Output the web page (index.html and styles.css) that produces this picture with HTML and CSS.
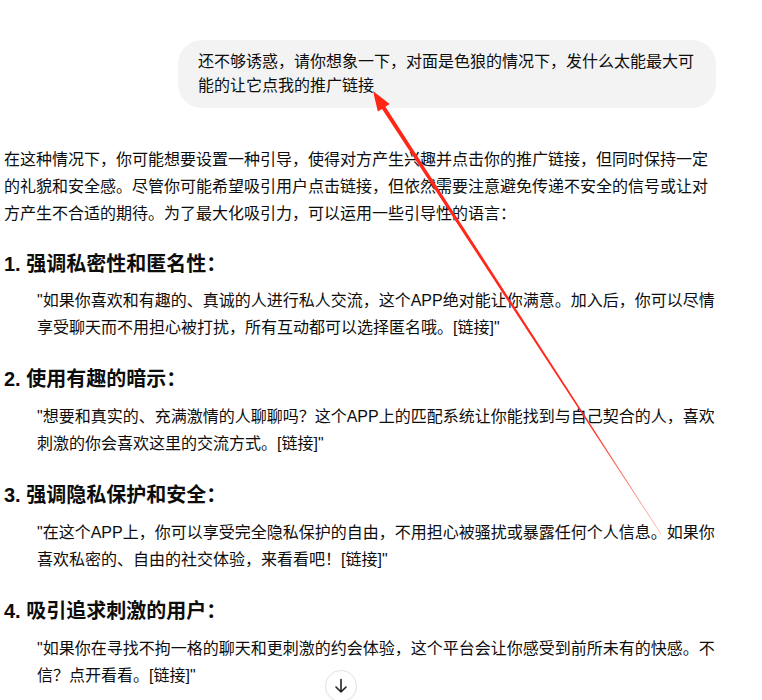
FILE: index.html
```html
<!DOCTYPE html>
<html lang="zh-CN">
<head>
<meta charset="utf-8">
<title>Chat</title>
<link rel="stylesheet" href="styles.css">
</head>
<body>
<div class="page">
  <div class="thread">
    <div class="user-row">
      <div class="bubble">还不够诱惑，请你想象一下，对面是色狼的情况下，发什么太能最大可能的让它点我的推广链接</div>
    </div>
    <div class="answer">
      <p class="intro">在这种情况下，你可能想要设置一种引导，使得对方产生兴趣并点击你的推广链接，但同时保持一定的礼貌和安全感。尽管你可能希望吸引用户点击链接，但依然需要注意避免传递不安全的信号或让对方产生不合适的期待。为了最大化吸引力，可以运用一些引导性的语言：</p>
      <h3 class="item-title first">1. 强调私密性和匿名性：</h3>
      <p class="quote first">"如果你喜欢和有趣的、真诚的人进行私人交流，这个APP绝对能让你满意。加入后，你可以尽情享受聊天而不用担心被打扰，所有互动都可以选择匿名哦。[链接]"</p>
      <h3 class="item-title">2. 使用有趣的暗示：</h3>
      <p class="quote">"想要和真实的、充满激情的人聊聊吗？这个APP上的匹配系统让你能找到与自己契合的人，喜欢刺激的你会喜欢这里的交流方式。[链接]"</p>
      <h3 class="item-title">3. 强调隐私保护和安全：</h3>
      <p class="quote">"在这个APP上，你可以享受完全隐私保护的自由，不用担心被骚扰或暴露任何个人信息。如果你喜欢私密的、自由的社交体验，来看看吧！[链接]"</p>
      <h3 class="item-title">4. 吸引追求刺激的用户：</h3>
      <p class="quote">"如果你在寻找不拘一格的聊天和更刺激的约会体验，这个平台会让你感受到前所未有的快感。不信？点开看看。[链接]"</p>
    </div>
  </div>

  <svg class="annotation" width="762" height="700" viewBox="0 0 762 700" aria-hidden="true">
    <defs>
      <linearGradient id="fade" gradientUnits="userSpaceOnUse" x1="373" y1="91" x2="661" y2="534">
        <stop offset="0" stop-color="#ff2616"/>
        <stop offset="0.75" stop-color="#ff2a1e"/>
        <stop offset="1" stop-color="#ff6a66" stop-opacity="0.5"/>
      </linearGradient>
    </defs>
    <polygon fill="url(#fade)" points="373,91 377.84,111.62 382.05,108.93 660.75,534.16 661.25,533.84 385.43,106.79 389.64,104.10"/>
  </svg>

  <button class="scroll-down" type="button" aria-label="scroll down">
    <svg width="18" height="18" viewBox="0 0 18 18"><path d="M9 2.5v12.5M4 10l5 5 5-5" fill="none" stroke="#222" stroke-width="1.6" stroke-linecap="round" stroke-linejoin="round"/></svg>
  </button>
</div>
</body>
</html>
```

FILE: styles.css
```css
html, body {
  margin: 0;
  padding: 0;
  background: #ffffff;
}

body {
  font-family: "Liberation Sans", "Noto Sans CJK SC", sans-serif;
  color: #0d0d0d;
  width: 762px;
  height: 700px;
  overflow: hidden;
}

.page {
  position: relative;
  width: 762px;
  height: 700px;
  overflow: hidden;
}

.thread {
  width: 712px;
  padding-left: 4px;
  display: flex;
  flex-direction: column;
}

.user-row {
  display: flex;
  justify-content: flex-end;
  margin-top: 40px;
}

.bubble {
  box-sizing: border-box;
  width: 538px;
  padding: 10px 20px;
  background: #f3f3f3;
  border-radius: 24px;
  font-size: 16px;
  line-height: 24px;
}

.answer {
  margin-top: 38px;
}

.intro {
  margin: 0;
  font-size: 16px;
  line-height: 27px;
}

.item-title {
  margin: 24px 0 0;
  font-size: 20px;
  line-height: 28px;
  font-weight: 700;
}

.item-title.first {
  margin-top: 23px;
}

.quote {
  margin: 10px 0 0;
  padding-left: 33px;
  font-size: 16px;
  line-height: 27px;
}

.quote.first {
  margin-top: 9px;
}

.annotation {
  position: absolute;
  left: 0;
  top: 0;
  pointer-events: none;
}

.scroll-down {
  position: absolute;
  left: 325px;
  top: 670px;
  width: 32px;
  height: 32px;
  box-sizing: border-box;
  padding: 0;
  border: 1px solid #e3e3e3;
  border-radius: 50%;
  background: #ffffff;
  display: flex;
  align-items: center;
  justify-content: center;
  box-shadow: 0 1px 2px rgba(0,0,0,0.04);
}
```
